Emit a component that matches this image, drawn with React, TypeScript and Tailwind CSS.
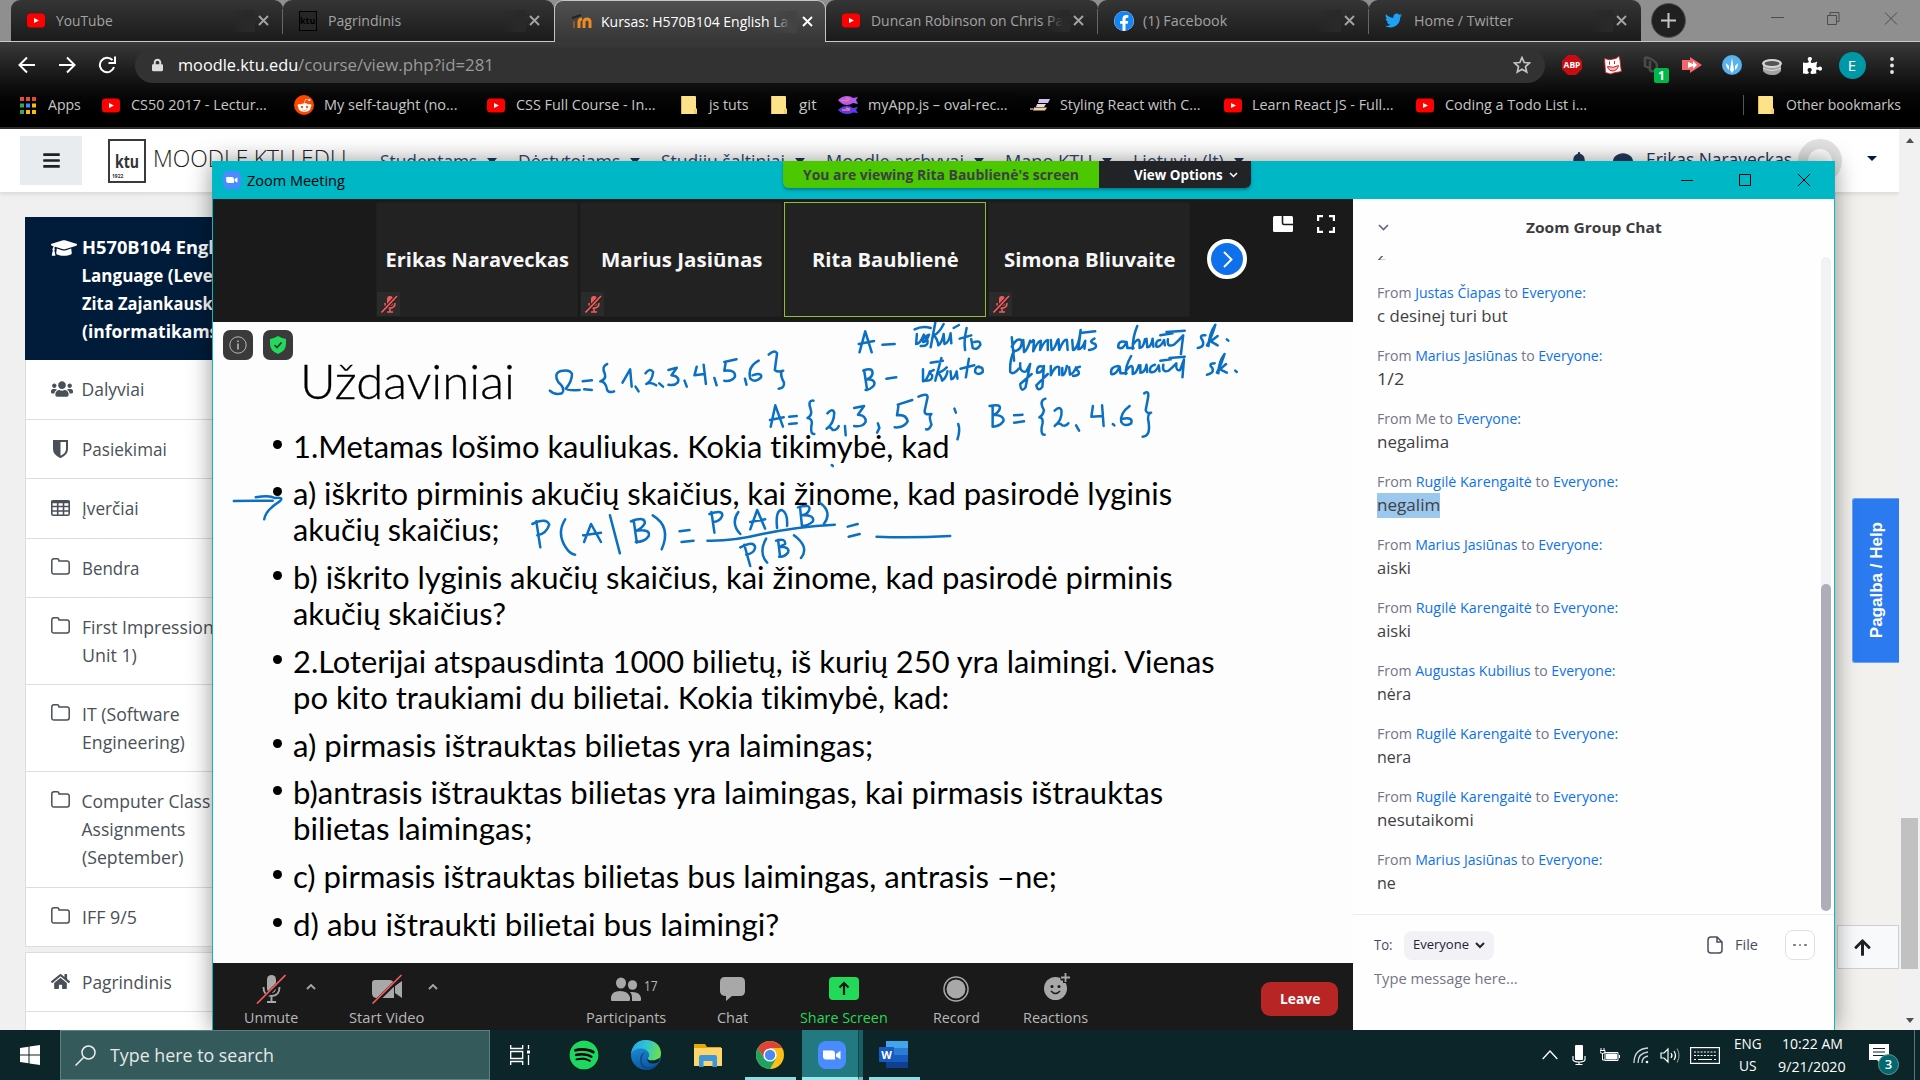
import React, { useLayoutEffect, useRef, useState } from "react";
import {
  FaBars, FaBell, FaComment, FaFacebook, FaGraduationCap, FaHome, FaLock, FaRedditAlien,
  FaSpotify, FaTwitter, FaUsers, FaPuzzlePiece, FaArrowUp,
} from "react-icons/fa";

/* Text stretched or squeezed horizontally so that it fills the width of its box. */
function Fit({ className = "", children }: { className?: string; children: React.ReactNode }) {
  const outer = useRef<HTMLSpanElement>(null);
  const inner = useRef<HTMLSpanElement>(null);
  const [scale, setScale] = useState(1);
  useLayoutEffect(() => {
    if (outer.current && inner.current) {
      setScale(outer.current.clientWidth / inner.current.offsetWidth);
    }
  }, [children]);
  return (
    <span ref={outer} className={"block shrink-0 whitespace-nowrap " + className}>
      <span ref={inner} className="inline-block origin-left" style={{ transform: `scaleX(${scale})` }}>
        {children}
      </span>
    </span>
  );
}

const YouTube = () => (
  <svg className="h-[15px] w-[18px] shrink-0" viewBox="0 0 18 15">
    <rect width="18" height="14" y=".5" rx="3.5" fill="#f00" />
    <path d="M7 5l5 2.5L7 10z" fill="#fff" />
  </svg>
);

const Folder = () => (
  <svg className="h-[18px] w-[16px] shrink-0" viewBox="0 0 16 18">
    <path d="M0 1q0-1 1-1h13q1 0 1 1v11l1 1v4q0 1-1 1H1q-1 0-1-1z" fill="#fde28a" />
    <path d="M13 18v-5h2.5V18z" fill="#f3cf57" />
    <path d="M.5 0v18" stroke="#e2b93c" />
  </svg>
);

const Cross = ({ className = "" }: { className?: string }) => (
  <svg className={"size-[11px] shrink-0 " + className} viewBox="0 0 11 11" fill="none" stroke="currentColor" strokeWidth="1.9">
    <path d="M1 1l9 9M10 1l-9 9" />
  </svg>
);

const ZoomLogo = ({ className = "" }: { className?: string }) => (
  <svg className={"shrink-0 " + className} viewBox="0 0 28 28">
    <rect width="28" height="28" rx="8" fill="#4a8cff" />
    <path d="M5 9.5h9q3 0 3 3v6H8q-3 0-3-3zM18 13l4.500-3.200v8.400L18 15.500z" fill="#fff" />
  </svg>
);

/* ---------- browser ---------- */

function Tab({ icon, width, title, active, sep }: { icon: React.ReactNode; width: string; title: string; active?: boolean; sep?: boolean }) {
  return (
    <div
      className={
        "relative flex w-[271.700px] shrink-0 items-center " +
        (active
          ? "z-10 h-[42px] rounded-t-[9px] border-x border-t border-[#c4c4c4] bg-linear-to-b from-[#505050] to-[#363636] pl-[17px] text-white"
          : "h-[41px] rounded-t-[9px] bg-linear-to-b from-[#353535] to-[#1b1b1b] pl-[16px] text-[#a3a3a3]")
      }
    >
      <div className="flex w-[28px] shrink-0 items-center">{icon}</div>
      <div className="w-[192px] overflow-hidden pl-px">
        <Fit className={"text-[14.500px] leading-[22px] " + width}>{title}</Fit>
      </div>
      <div className={"absolute top-[10px] right-[28px] h-[22px] w-[24px] " + (active ? "bg-linear-to-r from-transparent to-[#434343] to-70%" : "bg-linear-to-r from-transparent to-[#292929] to-70%")} />
      <Cross className={"absolute top-[15px] " + (active ? "right-[12px]" : "right-[14px]")} />
      {sep && <div className="absolute top-[9px] right-0 h-[25px] w-px bg-[#666]" />}
    </div>
  );
}

const ext = "flex w-10 shrink-0 items-center justify-center";

function Bookmark({ ml, icon, gap, width, children }: { ml: string; icon: React.ReactNode; gap: string; width: string; children: string }) {
  return (
    <div className={"flex shrink-0 items-center " + ml}>
      {icon}
      <Fit className={gap + " " + width}>{children}</Fit>
    </div>
  );
}

function Browser() {
  return (
    <header className="flex h-[129px] shrink-0 flex-col bg-black">
      <div className="flex h-[42px] border-b border-[#c9c9c9] bg-[#8f8f8f] pl-[11px]">
        <Tab icon={<YouTube />} width="w-[57px]" title="YouTube" sep />
        <Tab
          icon={<div className="flex h-[20px] w-[18px] items-center justify-center border border-black bg-[#262626] text-[9px] font-bold text-black">ktu</div>}
          width="w-[73px]"
          title="Pagrindinis"
        />
        <Tab
          active
          icon={
            <svg className="h-[15px] w-[20px]" viewBox="0 0 20 15" fill="none" stroke="#f08a24" strokeWidth="3">
              <path d="M12 14V8q0-3 3-3t3 3v6M7 14V8q0-3 3-3" />
              <path d="M2 14V7" stroke="#8a5a2c" strokeWidth="2" />
              <path d="M0 4l9-3" stroke="#222" strokeWidth="2" />
            </svg>
          }
          width="w-[220px]"
          title="Kursas: H570B104 English Langua"
        />
        <Tab icon={<YouTube />} width="w-[204px]" title="Duncan Robinson on Chris Paul" sep />
        <Tab icon={<div className="flex size-5 items-center justify-center rounded-full bg-white"><FaFacebook className="size-5 text-[#1585f5]" /></div>} width="w-[84px]" title="(1) Facebook" sep />
        <Tab icon={<FaTwitter className="size-[17px] text-[#1da1f2]" />} width="w-[99px]" title="Home / Twitter" />
        <div className="mt-[3px] ml-[10px] flex size-[35px] shrink-0 items-center justify-center rounded-full border border-[#555] bg-[#202020]">
          <svg className="size-[15px]" viewBox="0 0 15 15" stroke="#c5c5c5" strokeWidth="2"><path d="M7.500 0v15M0 7.500h15" /></svg>
        </div>
        <svg className="mt-[12px] ml-[85px] h-[13px] w-[127px]" viewBox="0 0 127 13" fill="none" stroke="#4d4d4d">
          <path d="M0 5.500h13M56.500 3.500h9v9h-9zM59 3V.5h9v9h-2M114 .5l12 12M126 .5l-12 12" />
        </svg>
      </div>
      <div className="flex h-[85px] flex-col bg-linear-to-b from-[#3a3a3a] via-[#0a0a0a] via-[58%] to-black">
        <div className="flex h-[46px] items-center text-white">
          <svg className="ml-[18px] h-[18px] w-[98px] shrink-0" viewBox="0 0 98 18" fill="none" stroke="#fff" strokeWidth="2">
            <path d="M17 9H2M9 1.500L1.500 9 9 16.500M41 9h15M49 1.500L56.500 9 49 16.500" />
            <path d="M94.500 4.200A7.200 7.200 0 1 0 96 11M97 .5v6.500h-6.500" />
          </svg>
          <div className="ml-[19px] flex h-[35px] w-[1410px] shrink-0 items-center rounded-full bg-[#323232] pl-[17px]">
            <FaLock className="h-[14px] w-[11px] text-[#dcdcdc]" />
            <Fit className="ml-[15px] w-[120px] text-[17px] text-white">moodle.ktu.edu</Fit>
            <Fit className="w-[196px] text-[17px] text-[#9a9a9a]">/course/view.php?id=281</Fit>
            <svg className="ml-[1019px] size-[18px] shrink-0" viewBox="0 0 18 18" fill="none" stroke="#c3c3c3" strokeWidth="1.700">
              <path d="M9 1.500l2.200 5 5.300.5-4 3.600 1.200 5.400L9 13.200 4.300 16l1.200-5.400-4-3.600 5.300-.5z" />
            </svg>
          </div>
          <div className="ml-[7px] flex h-full items-center">
            <div className={ext}>
              <svg className="size-[20px]" viewBox="0 0 20 20"><path d="M6 0h8l6 6v8l-6 6H6l-6-6V6z" fill="#c70d12" /><text x="10" y="13.200" fontSize="8.500" fontWeight="bold" textAnchor="middle" fill="#fff" fontFamily="Open Sans">ABP</text></svg>
            </div>
            <div className={ext}>
              <svg className="ml-[2px] size-[20px]" viewBox="0 0 20 20" stroke="#c22" strokeWidth=".9"><path d="M1.500 3.500l5 1.300 6.500-1.300L16 1l1 4 1.300 11.500-6.800 1.200-4 1.300-5-1.500z" fill="#fff" /><path d="M6.500 6.500v3M11.500 6v3M4.500 11.500q6 2 11-1-1 5-5.500 5.500-4.500 0-5.500-4.500z" fill="#f6b3b3" strokeWidth="1" /></svg>
            </div>
            <div className={ext + " relative"}>
              <svg className="size-[18px]" viewBox="0 0 18 18" fill="none" stroke="#4a4a4a" strokeWidth="2.500"><path d="M2 1l6 2q6 3 6 7 0 6-6 5l-1-1V5M2 1v9l4 2" /></svg>
              <div className="absolute top-[12px] left-[22px] flex h-[15px] w-[15px] items-center justify-center rounded-[2px] bg-[#00b84a] text-[12px] font-bold">1</div>
            </div>
            <div className={ext}>
              <svg className="h-[16px] w-[20px]" viewBox="0 0 20 16"><path d="M0 3h8V0l12 8-12 8v-3H0z" fill="#f3666b" /><path d="M6 5l5 2V4l4 4-4 4v-3l-5 2z" fill="#fff" /></svg>
            </div>
            <div className={ext}>
              <svg className="size-[20px]" viewBox="0 0 20 20"><circle cx="10" cy="10" r="10" fill="#58b2ee" /><path d="M10 3l2 12-2 3-2-3zM4 8l3 3v4q-3-2-3-7zM16 8l-3 3v4q3-2 3-7z" fill="#fff" /></svg>
            </div>
            <div className={ext}>
              <svg className="mt-1 h-[16px] w-[20px]" viewBox="0 0 20 16"><path d="M1 6v6q3 4 9 4t9-4V6z" fill="#a3a3a3" /><ellipse cx="10" cy="4.500" rx="10" ry="4.500" fill="#d5d5d5" /><ellipse cx="10" cy="4.500" rx="7.500" ry="2.500" fill="#555" /><path d="M1 9q9 5 18 0" stroke="#ddd" fill="none" /></svg>
            </div>
            <div className={ext}><FaPuzzlePiece className="size-[19px]" /></div>
            <div className={ext}><div className="flex size-[27px] items-center justify-center rounded-full bg-[#0097a7] text-[15px]">E</div></div>
            <div className={ext}><svg className="h-[17px] w-[4px]" viewBox="0 0 4 17" fill="#e6e6e6"><circle cx="2" cy="2" r="1.900" /><circle cx="2" cy="8.500" r="1.900" /><circle cx="2" cy="15" r="1.900" /></svg></div>
          </div>
        </div>
        <div className="flex h-[34px] items-center text-[14.500px] leading-[22px] text-[#c6c6c6]">
          <Bookmark
            ml="ml-[20px]"
            icon={
              <svg className="h-[17px] w-[16px]" viewBox="0 0 16 17">
                <path d="M0 0h4v4H0zM6 0h4v4H6zM12 0h4v4h-4z" fill="#e64a3c" /><path d="M0 6.500h4v4H0z" fill="#34a853" /><path d="M6 6.500h4v4H6z" fill="#4285f4" /><path d="M12 6.500h4v4h-4z" fill="#fbbc05" /><path d="M0 13h4v4H0z" fill="#34a853" /><path d="M6 13h4v4H6zM12 13h4v4h-4z" fill="#fbbc05" />
              </svg>
            }
            gap="ml-[12px]" width="w-[33px]"
          >Apps</Bookmark>
          <Bookmark ml="ml-[21px]" icon={<YouTube />} gap="ml-[11px]" width="w-[136px]">CS50 2017 - Lectur...</Bookmark>
          <Bookmark ml="ml-[27px]" icon={<div className="flex size-[20px] items-center justify-center rounded-full bg-[#ff4500]"><FaRedditAlien className="size-[15px] text-white" /></div>} gap="ml-[10px]" width="w-[133px]">My self-taught (no...</Bookmark>
          <Bookmark ml="ml-[30px]" icon={<YouTube />} gap="ml-[11px]" width="w-[140px]">CSS Full Course - In...</Bookmark>
          <Bookmark ml="ml-[25px]" icon={<Folder />} gap="ml-[12px]" width="w-[39px]">js tuts</Bookmark>
          <Bookmark ml="ml-[23px]" icon={<Folder />} gap="ml-[12px]" width="w-[18px]">git</Bookmark>
          <Bookmark
            ml="ml-[21px]"
            icon={<svg className="h-[18px] w-[20px]" viewBox="0 0 20 18"><path d="M0 4q4-4 9-4 4 0 6 2l5-1-2 3 2 4-5-1q-3 2-6 2-5 0-9-5z" fill="#b45cf0" /><path d="M0 14q4-4 9-4 4 0 6 2l5-1-2 3 2 3-5-.5q-3 1.500-6 1.500-5 0-9-4z" fill="#5a3de8" /><path d="M3 4.500h8M4 14h8M8 2l4 1M8 12l4 1" stroke="#f2789b" strokeWidth="1.400" /></svg>}
            gap="ml-[10px]" width="w-[140px]"
          >myApp.js – oval-rec...</Bookmark>
          <Bookmark
            ml="ml-[22px]"
            icon={<svg className="h-[12px] w-[20px]" viewBox="0 0 20 12"><path d="M9 0h11l-2 4H8z" fill="#cfc2f2" /><path d="M7 5h9l-2 3H6z" fill="#ddd" /><path d="M4 8.500h13l-2 3H3z" fill="#f5cf9f" /><path d="M0 10h3" stroke="#fff" /></svg>}
            gap="ml-[10px]" width="w-[141px]"
          >Styling React with C...</Bookmark>
          <Bookmark ml="ml-[23px]" icon={<YouTube />} gap="ml-[10px]" width="w-[142px]">Learn React JS - Full...</Bookmark>
          <Bookmark ml="ml-[22px]" icon={<YouTube />} gap="ml-[11px]" width="w-[142px]">Coding a Todo List i...</Bookmark>
          <div className="ml-[156px] h-5 w-px bg-[#555]" />
          <Bookmark ml="ml-[14px]" icon={<Folder />} gap="ml-[12px]" width="w-[115px]">Other bookmarks</Bookmark>
        </div>
      </div>
      <div className="h-[2px] bg-[#2b2b2b]" />
    </header>
  );
}

/* ---------- moodle page ---------- */

function NavItem({ ml, width, children }: { ml: string; width: string; children: string }) {
  return (
    <div className={"flex shrink-0 items-center " + ml}>
      <Fit className={"mt-px text-[17.500px] text-[#33476b] " + width}>{children}</Fit>
      <div className="ml-[10px] border-x-[5.500px] border-t-[6px] border-x-transparent border-t-[#1f3358]" />
    </div>
  );
}

function SideItem({ icon, h, lines }: { icon: React.ReactNode; h: string; lines: [string, string][] }) {
  return (
    <div className={"flex w-[300px] border-b border-[#dcdddf] bg-white pt-[15px] pl-[25px] text-[#495057] " + h}>
      <div className="flex h-[27px] w-[30.500px] shrink-0 items-center">{icon}</div>
      <div>
        {lines.map(([t, w]) => (
          <Fit key={t} className={"text-[17.500px] leading-[28px] " + w}>{t}</Fit>
        ))}
      </div>
    </div>
  );
}

function MoodlePage() {
  const folder = (
    <svg className="mb-[2px] h-[17px] w-[19px]" viewBox="0 0 19 17" fill="none" stroke="currentColor" strokeWidth="1.500">
      <path d="M.8 3q0-2.200 2.200-2.200h3q2 0 2 2.200h8q2.200 0 2.200 2.200v8.600q0 2.200-2.200 2.200H3Q.8 16 .8 13.800z" />
    </svg>
  );
  return (
    <main className="flex h-[901px] shrink-0 bg-linear-to-r from-[#f0f0f1] to-[#f2f1ed]">
      <div className="flex w-[1899px] flex-col">
        <div className="flex h-[63px] shrink-0 items-center bg-white shadow-[0_2px_4px_rgba(0,0,0,0.1)]">
          <div className="ml-[20px] flex h-[49px] w-[62px] shrink-0 items-center justify-center bg-[#e9ecef]"><FaBars className="size-[19px] text-[#1d2125]" /></div>
          <div className="relative ml-[26px] flex h-[44px] w-[38px] shrink-0 items-center justify-center border-2 border-[#3a3a3a] pt-[3px]">
            <Fit className="w-[24px] text-[17px] leading-5 font-bold text-[#333]">ktu</Fit>
            <span className="absolute bottom-[2px] left-[2px] text-[5px] leading-[6px] font-bold text-[#333]">1922</span>
          </div>
          <Fit className="ml-[7px] w-[193px] pb-1 text-[23.500px] font-light text-[#222]">MOODLE.KTU.EDU</Fit>
          <NavItem ml="ml-[34px]" width="w-[97px]">Studentams</NavItem>
          <NavItem ml="ml-[21px]" width="w-[102px]">Dėstytojams</NavItem>
          <NavItem ml="ml-[21px]" width="w-[124px]">Studijų šaltiniai</NavItem>
          <NavItem ml="ml-[21px]" width="w-[138px]">Moodle archyvai</NavItem>
          <NavItem ml="ml-[21px]" width="w-[87px]">Mano KTU</NavItem>
          <NavItem ml="ml-[21px]" width="w-[91px]">Lietuvių (lt)</NavItem>
          <FaBell className="ml-[326px] size-[18px] shrink-0 text-[#24385c]" />
          <FaComment className="mt-[3px] ml-[25px] size-[20px] shrink-0 text-[#24385c]" />
          <Fit className="ml-[13px] w-[146px] pb-[3px] text-[17.500px] text-[#1f3358]">Erikas Naraveckas</Fit>
          <div className="ml-[6px] size-[44px] shrink-0 rounded-full border-[10px] border-[#e2e2e2] bg-white" />
          <div className="mb-[5px] ml-[25px] border-x-[5.500px] border-t-[5.500px] border-x-transparent border-t-[#001c3a]" />
        </div>
        <div className="flex">
          <div className="mt-[25px] ml-[25px] flex flex-col">
            <div className="flex h-[143px] w-[300px] bg-[#001c3a] pt-[17px] pl-[26px] font-bold text-white">
              <FaGraduationCap className="mt-[1px] size-[26px] shrink-0" />
              <div className="ml-[4.500px] text-[17px]">
                <Fit className="w-[158px] leading-[28px]">H570B104 English</Fit>
                <Fit className="w-[167px] leading-[28px]">Language (Level C1)</Fit>
                <Fit className="w-[163px] leading-[28px]">Zita Zajankauskaitė</Fit>
                <Fit className="w-[142px] leading-[28px]">(informatikams)</Fit>
              </div>
            </div>
            <div className="border-l border-[#dcdddf]">
              <SideItem h="h-[60px]" icon={<FaUsers className="size-[22px]" />} lines={[["Dalyviai", "w-[63px]"]]} />
              <SideItem h="h-[59px]" icon={<svg className="ml-[2px] h-[18px] w-[15px]" viewBox="0 0 15 18"><path d="M1 1h13v8q0 5-6.500 8Q1 14 1 9z" fill="none" stroke="currentColor" strokeWidth="2" /><path d="M1 1h6.500v16Q1 14 1 9z" fill="currentColor" /></svg>} lines={[["Pasiekimai", "w-[85px]"]]} />
              <SideItem h="h-[60px]" icon={<svg className="h-[16px] w-[19px]" viewBox="0 0 19 16" fill="none" stroke="currentColor" strokeWidth="1.600"><rect x=".8" y=".8" width="17.400" height="14.400" rx="1.500" /><path d="M0 2h19" strokeWidth="2.500" /><path d="M1 6.500h17M1 11h17M6.700 1v14M12.500 1v14" /></svg>} lines={[["Įverčiai", "w-[57px]"]]} />
              <SideItem h="h-[59px]" icon={folder} lines={[["Bendra", "w-[57px]"]]} />
              <SideItem h="h-[87px]" icon={folder} lines={[["First Impressions (", "w-[150px]"], ["Unit 1)", "w-[55px]"]]} />
              <SideItem h="h-[87px]" icon={folder} lines={[["IT (Software", "w-[98px]"], ["Engineering)", "w-[103px]"]]} />
              <SideItem h="h-[116px]" icon={folder} lines={[["Computer Class", "w-[129px]"], ["Assignments", "w-[104px]"], ["(September)", "w-[101px]"]]} />
              <SideItem h="h-[59px]" icon={folder} lines={[["IFF 9/5", "w-[55px]"]]} />
            </div>
            <div className="mt-[5px] border-t border-l border-[#dcdddf]">
              <SideItem h="h-[59px]" icon={<FaHome className="size-[19px]" />} lines={[["Pagrindinis", "w-[90px]"]]} />
              <div className="h-[19px] bg-white" />
            </div>
          </div>
          <div className="ml-auto flex flex-col items-end">
            <div className="mt-[306px] flex h-[165px] w-[47px] items-center justify-center rounded-l-[3px] border border-r-0 border-[#6aa3f5] bg-[#2b7af0]">
              <span className="mr-[-2px] rotate-180 font-['Liberation_Sans'] text-[17px] font-bold whitespace-nowrap text-white [writing-mode:vertical-rl]">Pagalba / Help</span>
            </div>
            <div className="mt-[262px] flex h-[44px] w-[62px] items-center justify-center border border-[#ced0d3] bg-[#f8f9fa]">
              <FaArrowUp className="mr-[11px] size-[19px] text-[#1d2125]" />
            </div>
          </div>
        </div>
      </div>
      <div className="flex w-[21px] flex-col items-center bg-[#f1f1f1]">
        <div className="mt-[9px] border-x-[4px] border-b-[5px] border-x-transparent border-b-[#505050]" />
        <div className="mt-[675px] h-[151px] w-[17px] bg-[#c1c1c1]" />
        <div className="mt-[49px] border-x-[4px] border-t-[5px] border-x-transparent border-t-[#505050]" />
      </div>
    </main>
  );
}

/* ---------- zoom meeting ---------- */

const MicOff = () => (
  <svg className="ml-[2px] h-[18px] w-[17px]" viewBox="0 0 17 18">
    <rect x="6" y="1" width="6" height="10" rx="3" fill="#f35b5b" />
    <path d="M4 8q0 5 5 5t5-5M9 13v4M6 17h6" stroke="#f35b5b" strokeWidth="1.600" fill="none" />
    <path d="M1 17L16 1" stroke="#242424" strokeWidth="4" />
    <path d="M.5 17.500L16 1" stroke="#f35b5b" strokeWidth="1.700" />
  </svg>
);

function Tile({ name, width, speaking }: { name: string; width: string; speaking?: boolean }) {
  return (
    <div className={"relative flex h-[115px] w-[202px] shrink-0 items-center justify-center border bg-[#222] " + (speaking ? "border-[#8fbf24]" : "border-[#1e1f21]")}>
      <Fit className={"text-[20px] leading-7 font-bold text-[#f7f7f7] " + width}>{name}</Fit>
      {!speaking && <div className="absolute bottom-0 left-0 flex h-[24px] w-[23px] items-center justify-center bg-[#2b2b2b]"><MicOff /></div>}
    </div>
  );
}

const slideLines: { rows: [string, string][] }[] = [
  { rows: [["1.Metamas lošimo kauliukas. Kokia tikimybė, kad", "w-[657px]"]] },
  { rows: [["a) iškrito pirminis akučių skaičius, kai žinome, kad pasirodė lyginis", "w-[879px]"], ["akučių skaičius;", "w-[207px]"]] },
  { rows: [["b) iškrito lyginis akučių skaičius, kai žinome, kad pasirodė pirminis", "w-[880px]"], ["akučių skaičius?", "w-[213px]"]] },
  { rows: [["2.Loterijai atspausdinta 1000 bilietų, iš kurių 250 yra laimingi. Vienas", "w-[922px]"], ["po kito traukiami du bilietai. Kokia tikimybė, kad:", "w-[656px]"]] },
  { rows: [["a) pirmasis ištrauktas bilietas yra laimingas;", "w-[580px]"]] },
  { rows: [["b)antrasis ištrauktas bilietas yra laimingas, kai pirmasis ištrauktas", "w-[870px]"], ["bilietas laimingas;", "w-[239px]"]] },
  { rows: [["c) pirmasis ištrauktas bilietas bus laimingas, antrasis –ne;", "w-[764px]"]] },
  { rows: [["d) abu ištraukti bilietai bus laimingi?", "w-[486px]"]] },
];

/* Pen strokes drawn by the presenter over the slide. */
function Ink() {
  const top = [
    "M260 487L275 424L292 487M258 462L298 453M320 464L352 462",
    "M404 418Q425 406 446 414M410 432L408 462Q418 462 428 434L426 456Q434 458 442 434Q424 440 438 452Q440 470 420 468",
    "M458 398L446 472M480 402Q468 430 454 436Q464 446 466 466Q476 458 480 432L482 462Q494 458 498 430L500 460M506 414L520 405M540 414Q532 450 536 480M522 446L552 436M552 448L556 474Q568 482 576 464Q576 450 560 456",
    "M658 442L664 512M658 470Q672 440 684 452Q686 478 664 484M688 450L690 486Q698 482 706 452Q708 462 714 450M716 452L714 484Q726 452 734 452L732 480Q744 450 752 450L752 480M760 450L762 480Q768 482 778 450M780 448L782 480Q794 446 802 450L804 480M816 450L818 480Q832 476 838 420L832 478Q842 478 850 452L848 476M842 428L876 424M874 446Q856 456 876 462Q884 476 860 480",
    "M956 456Q936 450 936 472Q948 482 958 456L960 474L976 474M986 408Q974 440 974 476M976 462Q990 440 992 456L992 474Q1002 474 1006 448M1010 446L1012 472Q1022 472 1026 446L1028 470M1046 450Q1032 452 1036 470Q1046 474 1056 450L1058 466M1066 448Q1062 474 1082 464Q1094 452 1106 436L1100 492M1046 436L1078 430M1062 426L1110 422",
    "M1164 436Q1146 434 1156 450Q1164 470 1144 474M1168 466Q1180 444 1190 404Q1174 430 1172 468M1196 438L1178 454L1196 466M1220 448L1224 452",
    "M272 540L280 600M270 542Q296 530 294 552Q290 566 278 568Q304 568 298 586Q288 600 276 600M330 566L356 562",
    "M426 538L426 574Q436 572 444 544M454 540Q438 546 450 556Q452 572 434 572M446 518L478 512M474 504L458 572M488 532Q476 546 464 548Q474 556 476 572Q486 566 490 544M498 544L500 568Q508 566 514 544L516 566M546 506L538 562M524 536L560 526M574 530Q562 528 562 546Q570 558 582 546Q584 530 572 532",
    "M664 482Q652 510 654 546Q662 556 676 536M680 520Q678 550 696 544L706 522M706 522L694 592Q682 610 680 582L710 552M740 530Q722 524 724 548Q738 550 742 528L738 590Q726 608 722 586L752 552M760 528L760 556Q772 524 782 532L782 554M790 534L790 556Q798 554 802 528M808 532L810 554Q820 550 826 532M836 530Q820 534 832 544Q838 556 818 558",
    "M936 528Q914 530 918 552Q930 556 940 530L942 550L958 550M970 498Q954 530 956 552M958 540Q972 520 974 534L974 552Q984 550 990 526M994 526L994 548Q1006 548 1010 524L1012 546M1032 524Q1016 528 1020 546Q1034 550 1042 526L1044 544M1054 524Q1050 550 1068 542Q1080 530 1088 520Q1086 544 1098 540L1108 508L1104 562M1046 512L1074 508M1070 504L1110 500",
    "M1188 520Q1170 520 1182 534Q1188 550 1168 554M1194 548Q1206 524 1214 492Q1198 516 1198 550M1218 522L1202 538L1220 548M1242 542L1246 546",
    "M28 710L40 646L60 710M26 690L62 682M76 680L96 678M76 702L96 700",
    "M140 632Q124 630 132 656Q138 676 124 684Q140 686 134 710Q132 734 142 732M176 670Q190 652 194 668Q194 700 174 716Q182 706 190 720Q200 722 206 708M222 708L224 736M246 654L272 648L256 674Q278 676 276 696Q268 712 246 708M308 700L312 714L306 728M360 644L398 630M362 646L358 676Q382 672 386 694Q376 714 352 712M414 620Q438 608 438 622L430 664Q430 676 448 672Q440 676 448 704Q442 720 434 718",
    "M508 656L512 668M518 702Q524 720 516 748",
    "M608 650L608 710M600 648Q632 640 626 658Q620 672 610 674Q640 676 636 694Q626 710 608 710M664 676L686 674M664 698L690 694",
    "M746 626Q728 632 742 660Q740 676 730 682Q744 684 736 712Q734 736 744 734M770 662Q784 646 788 662Q790 690 770 708Q780 694 790 706Q800 710 806 700M826 706L834 722M870 648L866 680L896 678M894 646L898 708M922 702L926 706M966 648Q940 670 944 696Q952 712 970 700Q976 680 948 686",
    "M1004 610Q1018 600 1014 624L1008 660Q1010 672 1022 668Q1010 672 1016 700Q1020 740 1000 740",
  ];
  const omega = [
    "M888 602Q900 616 920 610Q930 596 910 576Q898 552 914 544Q940 536 946 552Q946 574 930 596Q932 602 966 600",
    "M974 574L998 571M978 598L998 600",
    "M1038 522Q1022 530 1032 552Q1036 568 1020 574Q1034 574 1038 600Q1042 610 1056 604",
    "M1078 578L1098 538L1102 590M1112 590L1120 604M1138 550Q1150 532 1158 546Q1156 572 1140 582Q1152 574 1166 586M1174 580L1184 590",
    "M1198 540L1220 533L1206 556Q1230 560 1222 578Q1214 588 1198 584M1240 572L1246 590M1272 530L1266 556L1292 552M1290 524L1296 582M1318 564L1324 586",
    "M1344 516L1376 508M1348 516L1344 542Q1374 538 1372 560Q1362 576 1344 572M1398 566L1402 584M1434 512Q1404 530 1412 566Q1424 580 1440 562Q1444 546 1418 556",
    "M1460 494Q1474 478 1482 490L1476 540Q1484 548 1498 542Q1486 546 1500 578Q1502 594 1486 596",
  ];
  const formula = [
    "M48 123L126 122M92 112Q120 104 130 114Q150 110 140 124Q112 150 109 178",
    "M656 184L664 262M648 192Q676 172 682 194Q676 222 658 226M714 178Q696 220 716 264Q724 282 734 284",
    "M752 246L766 192L786 246M750 226L786 218M804 166L824 280M852 184L858 248M846 184Q876 168 874 190Q868 206 856 212Q886 206 882 228Q874 246 856 246M890 166Q928 200 908 268",
    "M944 214L964 210M948 246L972 242M1000 242Q1050 244 1110 222Q1180 200 1256 194",
    "M1008 156L1014 218M1004 162Q1030 148 1030 166Q1026 184 1012 186M1062 156Q1046 190 1066 222M1086 208L1100 150L1116 206M1086 186L1116 178M1140 204Q1136 150 1150 150Q1162 160 1160 198",
    "M1186 140L1190 198M1182 142Q1210 130 1204 152Q1200 164 1190 166Q1216 164 1212 184Q1202 198 1190 198M1226 128Q1252 156 1234 192",
    "M1074 254L1086 318M1066 262Q1094 240 1096 262Q1094 280 1078 284M1118 236Q1102 278 1120 308M1142 240L1146 290M1138 242Q1158 234 1156 252L1146 260Q1166 260 1162 278Q1154 292 1144 290M1174 226Q1206 262 1188 294",
    "M1282 200L1302 192M1284 230L1306 222M1340 230Q1410 234 1488 228M1250 15L1252 18",
  ];
  return (
    <svg className="pointer-events-none absolute inset-0 h-[641px] w-[1140px]" viewBox="213 322 1140 641" fill="none" stroke="#0b6fc2" strokeWidth="2.500" strokeLinecap="round" strokeLinejoin="round">
      <g transform="translate(760 190) scale(0.38265 0.33333)">{top.map((d) => <path key={d} d={d} vectorEffect="non-scaling-stroke" />)}</g>
      <g transform="translate(210 190) scale(0.38265 0.33333)">{omega.map((d) => <path key={d} d={d} vectorEffect="non-scaling-stroke" />)}</g>
      <g transform="translate(210 460) scale(0.49745 0.33333)">{formula.map((d) => <path key={d} d={d} vectorEffect="non-scaling-stroke" />)}</g>
    </svg>
  );
}

function Slide() {
  return (
    <div className="relative h-[641px] overflow-hidden bg-[#fdfdfd] font-['Lato',sans-serif] text-black [font-variant-ligatures:none]">
      <div className="flex gap-[10px] pt-[8px] pl-[10px]">
        <div className="flex size-[30px] items-center justify-center rounded-[7px] bg-[#3a3a3a]">
          <svg className="size-[18px]" viewBox="0 0 18 18" fill="none" stroke="#b5b5b5"><circle cx="9" cy="9" r="8.200" /><path d="M9 7.500v6M9 4.500v1.600" strokeWidth="1.600" /></svg>
        </div>
        <div className="flex size-[30px] items-center justify-center rounded-[7px] bg-[#3a3a3a]">
          <svg className="h-[18px] w-[16px]" viewBox="0 0 16 18"><path d="M8 0q4 2.500 8 3v5q0 7-8 10Q0 15 0 8V3q4-.5 8-3z" fill="#22d95c" /><path d="M4.500 9l2.500 2.500 4.500-5" fill="none" stroke="#333" strokeWidth="1.700" /></svg>
        </div>
      </div>
      <Fit className="mt-[-7px] ml-[87px] w-[215px] text-[48px] leading-[56px] font-light [-webkit-text-stroke:0.3px_black]">Uždaviniai</Fit>
      <ul className="mt-[18.500px] ml-[60px] flex flex-col gap-[11.800px] text-[30.500px] leading-[36px]">
        {slideLines.map(({ rows }) => (
          <li key={rows[0][0]} className="flex">
            <span className="mt-[12px] mr-[11px] size-[9px] shrink-0 rounded-full bg-black" />
            <div>
              {rows.map(([t, w]) => <Fit key={t} className={w}>{t}</Fit>)}
            </div>
          </li>
        ))}
      </ul>
      <Ink />
    </div>
  );
}

function Tool({ className, icon, label, width, green }: { className: string; icon: React.ReactNode; label: string; width: string; green?: boolean }) {
  return (
    <div className={"flex shrink-0 flex-col items-center " + className}>
      <div className="mt-[6px] flex h-[39px] items-center justify-center">{icon}</div>
      <Fit className={"text-[14px] leading-5 " + width + (green ? " text-[#23d959]" : " text-[#b8b8b8]")}>{label}</Fit>
    </div>
  );
}

const Caret = () => (
  <svg className="mt-[21px] h-[6px] w-[10px]" viewBox="0 0 10 6" fill="none" stroke="#a8a8a8" strokeWidth="1.800"><path d="M1 5l4-4 4 4" /></svg>
);

function MeetingToolbar() {
  return (
    <div className="flex h-[67px] bg-[#1a1a1a]">
      <Tool
        className="ml-[28px] w-[60px]" label="Unmute" width="w-[54px]"
        icon={<svg className="h-[30px] w-[30px]" viewBox="0 0 30 30"><rect x="11" y="1" width="9" height="18" rx="4.500" fill="#a8a8a8" /><path d="M7.500 13q0 9 8 9t8-9M15.500 22v5M11 28h9" stroke="#a8a8a8" strokeWidth="1.900" fill="none" /><path d="M2 30L30 2" stroke="#1a1a1a" strokeWidth="4" /><path d="M1 29.500L29.500 1" stroke="#f35b5b" strokeWidth="1.700" /></svg>}
      />
      <div className="w-[20px]"><div className="flex justify-center"><Caret /></div></div>
      <Tool
        className="ml-[28px] w-[76px]" label="Start Video" width="w-[76px]"
        icon={<svg className="h-[30px] w-[32px]" viewBox="0 0 32 30"><path d="M1 9q0-3 3-3h14q5 0 5 5v13H6q-5 0-5-5zM24 12l7-5v17l-7-5z" fill="#a8a8a8" /><path d="M2 30.500L31 2" stroke="#1a1a1a" strokeWidth="4" /><path d="M1.500 29.500L30.500 1" stroke="#f35b5b" strokeWidth="1.700" /></svg>}
      />
      <div className="flex w-[16px] justify-center"><Caret /></div>
      <Tool
        className="ml-[140px] w-[90px]" label="Participants" width="w-[80px]"
        icon={
          <div className="relative flex">
            <svg className="h-[24px] w-[30px]" viewBox="0 0 30 24" fill="#a8a8a8"><ellipse cx="10" cy="6" rx="5" ry="5.500" /><ellipse cx="21.500" cy="8" rx="4.600" ry="4.800" /><path d="M0 23v-3q1-6 9-6t10 6v3q0 1-1 1H1q-1 0-1-1zM19 15q10-1 11 6v2q0 1-1 1h-8v-4q0-3-2-5z" /></svg>
            <Fit className="absolute -top-[1px] left-[33px] w-[14px] text-[14.500px] leading-5 text-[#b8b8b8]">17</Fit>
          </div>
        }
      />
      <Tool className="ml-[31px] w-[60px]" label="Chat" width="w-[31px]" icon={<svg className="h-[24px] w-[25px]" viewBox="0 0 25 24"><path d="M5 0h15q5 0 5 5v9q0 5-5 5h-8l-6 5v-5q-6 0-6-5V5q0-5 5-5z" fill="#a8a8a8" /></svg>} />
      <Tool
        className="ml-[34px] w-[96px]" label="Share Screen" width="w-[88px]" green
        icon={<svg className="h-[23px] w-[30px]" viewBox="0 0 30 23"><rect width="30" height="23" rx="4" fill="#23d959" /><path d="M15 18V7M10.500 10.500L15 6l4.500 4.500" fill="none" stroke="#1a1a1a" strokeWidth="2.200" /></svg>}
      />
      <Tool className="ml-[34px] w-[60px]" label="Record" width="w-[47px]" icon={<svg className="size-[26px]" viewBox="0 0 26 26"><circle cx="13" cy="13" r="12" fill="none" stroke="#a8a8a8" strokeWidth="1.500" /><circle cx="13" cy="13" r="9.500" fill="#a8a8a8" /></svg>} />
      <Tool
        className="ml-[34px] w-[70px]" label="Reactions" width="w-[65px]"
        icon={<svg className="mb-1 ml-[3px] h-[27px] w-[27px]" viewBox="0 0 27 27"><circle cx="12.500" cy="15.500" r="11.500" fill="#a8a8a8" /><circle cx="9" cy="13.500" r="1.500" fill="#1a1a1a" /><circle cx="16" cy="13.500" r="1.500" fill="#1a1a1a" /><path d="M8 18q4.500 5 9 0" stroke="#1a1a1a" strokeWidth="1.600" fill="none" /><path d="M22.500 0v10M17.500 5h10" stroke="#1a1a1a" strokeWidth="5" /><path d="M22.500 0v9M18 4.500h9" stroke="#a8a8a8" strokeWidth="1.800" /></svg>}
      />
      <div className="mt-[19px] ml-[171px] flex h-[34px] w-[77px] shrink-0 items-center justify-center rounded-[9px] bg-[#b72525]">
        <Fit className="w-[40px] text-[14.500px] font-bold text-white">Leave</Fit>
      </div>
    </div>
  );
}

const chat: [string, string, string, string, string][] = [
  ["Justas Čiapas", "w-[209px]", "c desinej turi but", "w-[131px]", ""],
  ["Marius Jasiūnas", "w-[225px]", "1/2", "w-[27px]", ""],
  ["Me", "w-[144px]", "negalima", "w-[72px]", ""],
  ["Rugilė Karengaitė", "w-[241px]", "negalim", "w-[63px]", "sel"],
  ["Marius Jasiūnas", "w-[225px]", "aiski", "w-[34px]", ""],
  ["Rugilė Karengaitė", "w-[241px]", "aiski", "w-[34px]", ""],
  ["Augustas Kubilius", "w-[239px]", "nėra", "w-[34px]", ""],
  ["Rugilė Karengaitė", "w-[241px]", "nera", "w-[34px]", ""],
  ["Rugilė Karengaitė", "w-[241px]", "nesutaikomi", "w-[97px]", ""],
  ["Marius Jasiūnas", "w-[225px]", "ne", "w-[19px]", ""],
];

function ChatPanel() {
  return (
    <aside className="flex w-[481px] flex-col bg-[#fefefe]">
      <div className="flex h-[57px] shrink-0 items-center pl-[25px]">
        <svg className="h-[7px] w-[11px]" viewBox="0 0 11 7" fill="none" stroke="#666484" strokeWidth="1.700"><path d="M1 1l4.500 4.500L10 1" /></svg>
        <Fit className="ml-[137px] w-[136px] text-[14.500px] font-bold text-[#3c3c41]">Zoom Group Chat</Fit>
      </div>
      <div className="flex h-[659px] shrink-0 border-b border-[#ebebf4]">
        <div className="w-[468px] pl-[24px]">
          <div className="flex h-[4px] items-end overflow-hidden text-[16px] text-[#39394d]"><span className="mb-[-5px] h-[20px] leading-[20px]">2</span></div>
          <div className="pt-[21px]">
            {chat.map(([who, w, text, tw, sel], i) => (
              <div key={i} className="h-[63px]">
                <Fit className={"text-[14px] leading-[23px] text-[#747487] " + w}>
                  From <span className={who === "Me" ? "" : "text-[#0e71eb]"}>{who}</span> to <span className="text-[#0e71eb]">Everyone:</span>
                </Fit>
                <Fit className={"h-[25px] text-[16px] leading-[24px] text-[#3f3f44] " + tw + (sel ? " bg-[#9bc8ec]" : "")}>{text}</Fit>
              </div>
            ))}
          </div>
        </div>
        <div className="mt-px flex h-[654px] w-[10px] flex-col justify-end rounded-full bg-[#f1f1f6]"><div className="h-[327px] rounded-full bg-[#aeadb8]" /></div>
      </div>
      <div className="flex h-[47px] items-center pt-[13px] pl-[21px]">
        <Fit className="w-[19px] text-[14.500px] text-[#4c4c60]">To:</Fit>
        <div className="ml-[11px] flex h-[29px] w-[90px] items-center rounded-lg bg-[#f1f1f6] pl-[9px]">
          <Fit className="w-[56px] text-[13px] text-[#232333]">Everyone</Fit>
          <svg className="ml-[6px] h-[7px] w-[10px]" viewBox="0 0 10 7" fill="none" stroke="#232333" strokeWidth="2"><path d="M1 1l4 4 4-4" /></svg>
        </div>
        <svg className="ml-[213px] h-[18px] w-[16px]" viewBox="0 0 16 18" fill="none" stroke="#4c4c60" strokeWidth="1.500"><path d="M4 1h6l5 5v8q0 3-3 3H4q-3 0-3-3V4q0-3 3-3zM10 1v5h5" /></svg>
        <Fit className="ml-[12px] w-[23px] text-[14.500px] text-[#4c4c60]">File</Fit>
        <div className="ml-[27px] flex size-[30px] items-center justify-center gap-[3px] rounded-lg border border-[#dfdfeb] bg-white">
          <i className="size-[2.500px] rounded-full bg-[#747487]" /><i className="size-[2.500px] rounded-full bg-[#747487]" /><i className="size-[2.500px] rounded-full bg-[#747487]" />
        </div>
      </div>
      <Fit className="mt-[5px] ml-[21px] w-[144px] text-[15px] leading-[22px] text-[#747487]">Type message here...</Fit>
    </aside>
  );
}

function ZoomWindow() {
  return (
    <section className="absolute top-[161px] left-[212px] flex h-[869px] w-[1623px] flex-col border-x border-[#14b3c0] shadow-[0_0_22px_rgba(0,0,0,0.42)]">
      <div className="flex h-[38px] shrink-0 items-center bg-[#00b7c6] pl-[10px]">
        <ZoomLogo className="size-[18px]" />
        <Fit className="mt-[1px] ml-[6px] w-[98px] text-[14.500px] text-black">Zoom Meeting</Fit>
        <div className="ml-[438px] flex h-[27px] w-[468px] shrink-0 self-start overflow-hidden rounded-b-[6px] text-[14.500px] font-bold shadow-[0_2px_3px_rgba(0,0,0,0.3)]">
          <div className="flex w-[316px] items-center justify-center bg-[#4bc800]"><Fit className="w-[276px] text-[#3c4043]">You are viewing Rita Baublienė's screen</Fit></div>
          <div className="flex w-[152px] items-center bg-[#212327] pl-[35px] text-white">
            <Fit className="w-[89px]">View Options</Fit>
            <svg className="ml-[6px] h-[6px] w-[9px]" viewBox="0 0 9 6" fill="none" stroke="#fff" strokeWidth="1.500"><path d="M1 1l3.500 3.500L8 1" /></svg>
          </div>
        </div>
        <svg className="ml-[430px] h-[12px] w-[129px]" viewBox="0 0 129 12" fill="none" stroke="#000"><path d="M0 6.500h12M58.500.5h11v11h-11zM117 0l12 12M129 0l-12 12" /></svg>
      </div>
      <div className="flex min-h-0 flex-1">
        <div className="flex w-[1140px] shrink-0 flex-col">
          <div className="flex h-[123px] shrink-0 bg-[#1a1a1a] pt-[3px] pl-[163px]">
            <div className="flex gap-[2px]">
              <Tile name="Erikas Naraveckas" width="w-[183px]" />
              <Tile name="Marius Jasiūnas" width="w-[161px]" />
              <Tile name="Rita Baublienė" width="w-[147px]" speaking />
              <Tile name="Simona Bliuvaite" width="w-[171px]" />
            </div>
            <div className="mt-[37px] ml-[17px] flex size-[40px] shrink-0 items-center justify-center rounded-full border-4 border-white bg-[#0e71eb]">
              <svg className="ml-[2px] h-[17px] w-[10px]" viewBox="0 0 10 17" fill="none" stroke="#fff" strokeWidth="1.900"><path d="M1 1l7.500 7.500L1 16" /></svg>
            </div>
            <svg className="mt-[14px] ml-[26px] h-[16px] w-[20px] shrink-0" viewBox="0 0 20 16"><rect width="20" height="16" rx="1.500" fill="#fff" /><path d="M9.500 0v7q0 1.500 1.500 1.500h9" stroke="#1a1a1a" strokeWidth="1.600" fill="none" /></svg>
            <svg className="mt-[13px] ml-[24px] h-[18px] w-[18px] shrink-0" viewBox="0 0 18 18" fill="none" stroke="#fff" strokeWidth="2.200"><path d="M1.100 6V1.100H6M12 1.100h4.900V6M16.900 12v4.900H12M6 16.900H1.100V12" /></svg>
          </div>
          <Slide />
          <MeetingToolbar />
        </div>
        <ChatPanel />
      </div>
    </section>
  );
}

/* ---------- taskbar ---------- */

function Taskbar() {
  return (
    <footer className="relative z-20 flex h-[50px] shrink-0 items-center bg-[#0b2528] text-white">
      <svg className="ml-[20px] size-[20px] shrink-0" viewBox="0 0 20 20" fill="#fff"><path d="M0 3l8.500-1.200v7.700H0zM9.500 1.600L20 0v9.500H9.500zM0 10.500h8.500v7.700L0 17zM9.500 10.500H20V20L9.500 18.400z" /></svg>
      <div className="ml-[20px] flex h-[50px] w-[430px] shrink-0 items-center border border-[#5d8081] bg-[#355a5c] pl-[14px]">
        <svg className="size-[21px]" viewBox="0 0 21 21" fill="none" stroke="#eee" strokeWidth="1.500"><circle cx="13.500" cy="7.500" r="6.500" /><path d="M9 12l-8.500 8.500" /></svg>
        <Fit className="ml-[14px] w-[164px] text-[17.500px] text-[#e3e9e9]">Type here to search</Fit>
      </div>
      <svg className="ml-[20px] h-[20px] w-[20px] shrink-0" viewBox="0 0 20 20" fill="none" stroke="#fff" strokeWidth="1.300"><path d="M.7 0v3.500h12V0M.7 20v-3.500h12V20M.7 6.500h12v7H.7zM18.500 0v4M18.500 10v10" /><path d="M17 5.500h3v3h-3z" fill="#fff" stroke="none" /></svg>
      <div className="ml-[39px] flex size-[30px] shrink-0 items-center justify-center rounded-full bg-black"><FaSpotify className="size-[30px] text-[#1ed760]" /></div>
      <svg className="ml-[32px] size-[30px] shrink-0" viewBox="0 0 30 30">
        <defs>
          <linearGradient id="eg" x1="0" x2="1" y1="0.200" y2="0.400"><stop offset="0" stopColor="#28a4e6" /><stop offset=".5" stopColor="#2fc4d4" /><stop offset="1" stopColor="#6be04b" /></linearGradient>
          <linearGradient id="eb" x1="0" x2="0.300" y1="0" y2="1"><stop offset="0" stopColor="#1f9de2" /><stop offset="1" stopColor="#0c59a4" /></linearGradient>
        </defs>
        <circle cx="15" cy="15" r="15" fill="url(#eb)" />
        <path d="M11 22q1 6 9 5 5-1 7-4-3 6-10 7-8-1-8-10 0-6 5-8-4 5-3 10z" fill="#124a8c" />
        <path d="M0 14Q2 0 15 0q14 1 15 13 0 7-7 7.500-7 0-6-2.500 2-2 1-4.500Q16 9 11 8.500 3 8 0 14z" fill="url(#eg)" />
        <path d="M17 18q-1 3 6 2.500l6-2.500-1.500 4q-4 2.500-9 1-3-2-1.500-5z" fill="#0b2528" />
      </svg>
      <svg className="ml-[33px] h-[24px] w-[28px] shrink-0" viewBox="0 0 28 24"><path d="M0 1h11l2 3h14v19H0z" fill="#e8a60c" /><path d="M0 5h28v18H0z" fill="#fdd568" /><path d="M5 24V14q0-2 2-2h14q2 0 2 2v10h-4.500v-6h-9v6z" fill="#3a96dd" /></svg>
      <div className="ml-[23px] flex h-[50px] w-[51px] shrink-0 flex-col justify-between border-b-[3px] border-[#8fdde4] pt-[11px] pl-[11px]">
        <svg className="size-[28px]" viewBox="0 0 28 28">
          <circle cx="14" cy="14" r="14" fill="#fbc116" />
          <path d="M1.900 7A14 14 0 0 1 26.100 7H14l-6 10.500z" fill="#dd4437" />
          <path d="M1.900 7A14 14 0 0 0 14 28l6-10.500H8z" fill="#1da462" />
          <circle cx="14" cy="14" r="6.600" fill="#fff" /><circle cx="14" cy="14" r="5.200" fill="#4a8af4" />
        </svg>
      </div>
      <div className="ml-[6px] flex h-[50px] w-[56px] shrink-0 border-b-[3px] border-[#9beaf0] bg-[#227a80] pt-[11px] pl-[16px]"><ZoomLogo className="size-[28px]" /></div>
      <div className="h-[50px] w-[5px] shrink-0 border-b-[3px] border-l border-b-[#7fb9bd] border-l-[#0f4a4f] bg-[#1a5f64]" />
      <div className="ml-[6px] flex h-[50px] w-[51px] shrink-0 border-b-[3px] border-[#8fdde4] pt-[11px] pl-[10px]">
        <svg className="h-[27px] w-[29px]" viewBox="0 0 29 27">
          <path d="M7 0h22v7H7z" fill="#41a5ee" /><path d="M7 7h22v7H7z" fill="#2b7cd3" /><path d="M7 14h22v7H7z" fill="#185abd" /><path d="M7 21h22v6H7z" fill="#103f91" />
          <rect y="6" width="15" height="15" rx="1" fill="#185abd" /><text x="7.500" y="17.500" fontSize="11" fontWeight="bold" textAnchor="middle" fill="#fff" fontFamily="Open Sans">W</text>
        </svg>
      </div>
      <svg className="ml-[622px] h-[10px] w-[16px] shrink-0" viewBox="0 0 16 10" fill="none" stroke="#fff" strokeWidth="1.300"><path d="M.7 9L8 1l7.300 8" /></svg>
      <svg className="ml-[14px] h-[20px] w-[14px] shrink-0" viewBox="0 0 14 20"><rect x="3" width="8" height="15" rx="1" fill="#fff" /><path d="M1 11v4q1 2 6 2t6-2v-4M7 17v2.500M3.500 19.500h7" fill="none" stroke="#fff" strokeWidth="1.200" /></svg>
      <svg className="ml-[14px] h-[14px] w-[20px] shrink-0" viewBox="0 0 20 14" fill="none" stroke="#fff"><path d="M5 4.500h13v8H5zM19.500 7v3" /><path d="M6.500 6h10v5h-10z" fill="#fff" /><path d="M1 0v2M4 0v2M0 2.500h5v2q-2.500 2-5 0zM2.500 5v7H5" /></svg>
      <svg className="ml-[13px] h-[17px] w-[16px] shrink-0" viewBox="0 0 16 17" fill="none" stroke="#cfd8d8" strokeWidth="1.300"><path d="M1 16Q1 2 15 1M5 16Q5 6 15 5M9 16q0-6 6-7" /><circle cx="14" cy="15" r="1.300" fill="#fff" stroke="none" /></svg>
      <svg className="ml-[11px] h-[17px] w-[20px] shrink-0" viewBox="0 0 20 17" fill="none" stroke="#fff" strokeWidth="1.200"><path d="M1 6h3l4-4v13l-4-4H1zM11 6q2 2.500 0 5M14 4q3 4.500 0 9" /><path d="M17 1.500q4 7 0 14" stroke="#7d9192" /></svg>
      <svg className="ml-[10px] h-[17px] w-[30px] shrink-0" viewBox="0 0 30 17" fill="none" stroke="#fff" strokeWidth="1.200"><rect x=".6" y=".6" width="28.800" height="15.800" /><path d="M4 5h22M4 8.500h22" strokeDasharray="2 1.300" /><path d="M4 12.500h2M8 12.500h14M24 12.500h2" /></svg>
      <div className="ml-[13px] flex w-[30px] shrink-0 flex-col items-center text-[14.500px] leading-[22px]"><Fit className="w-[28px]">ENG</Fit><Fit className="w-[18px]">US</Fit></div>
      <div className="ml-[14px] flex w-[70px] shrink-0 flex-col items-center text-[14.500px] leading-[23px]"><Fit className="w-[61px]">10:22 AM</Fit><Fit className="w-[68px]">9/21/2020</Fit></div>
      <div className="relative ml-[22px] h-[32px] w-[32px] shrink-0">
        <svg className="mt-[5px] h-[20px] w-[20px]" viewBox="0 0 20 20"><path d="M0 0h20v16h-8v4l-4-4H0z" fill="#fff" /><path d="M4 4.500h12M4 8h12M4 11.500h12" stroke="#0b2528" strokeWidth="1.200" /></svg>
        <div className="absolute top-[15px] left-[9px] flex size-[21px] items-center justify-center rounded-full border border-[#6d9496] bg-[#00686e] text-[13px] font-semibold">3</div>
      </div>
      <div className="ml-[13px] h-[50px] w-px bg-[#5d7375]" />
    </footer>
  );
}

export default function App() {
  return (
    <div className="relative flex h-[1080px] w-[1920px] flex-col overflow-hidden font-['Open_Sans','Noto_Sans',sans-serif]">
      <Browser />
      <MoodlePage />
      <ZoomWindow />
      <Taskbar />
    </div>
  );
}
